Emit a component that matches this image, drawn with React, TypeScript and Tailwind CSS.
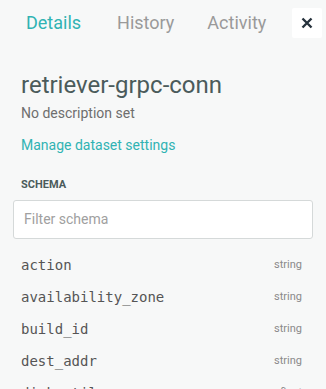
import React from "react";

const rows: [string, string][] = [
  ["action", "string"],
  ["availability_zone", "string"],
  ["build_id", "string"],
  ["dest_addr", "string"],
  ["disk_util", "float"],
];

export default function App() {
  return (
    <div
      className="w-[326px] h-[389px] overflow-hidden bg-[#f7f8f8]"
      style={{ fontFamily: "Roboto, 'Noto Sans', sans-serif" }}
    >
      <div className="flex items-start h-[50px] pt-[8px]">
        <div className="flex flex-1 pl-[26px] pt-[3px] text-[18px] leading-[24px]">
          <span className="text-[#30b3b3]">Details</span>
          <span className="text-[#9a9a9a] ml-[36px]">History</span>
          <span className="text-[#9a9a9a] ml-[33px]">Activity</span>
        </div>
        <div className="w-[30px] h-[30px] mr-[4px] bg-white rounded-[2px] flex items-center justify-center">
          <svg width="12" height="12" viewBox="0 0 12 12">
            <path d="M1.5 1.5 L10.5 10.5 M10.5 1.5 L1.5 10.5" stroke="#26323c" strokeWidth="2.4" strokeLinecap="butt" />
          </svg>
        </div>
      </div>
      <div className="px-[21px]">
        <h1 className="text-[24px] leading-[30px] text-[#4b5b5b] mt-[20px]">retriever-grpc-conn</h1>
        <p className="text-[14px] leading-[20px] text-[#6e6e6e] mt-[3px]">No description set</p>
        <p className="text-[14px] leading-[20px] text-[#30b3b3] mt-[12px]">Manage dataset settings</p>
        <p className="text-[11px] leading-[14px] font-bold text-[#4b5b5b] mt-[23px]">SCHEMA</p>
      </div>
      <div className="px-[13px] mt-[8px]">
        <div className="h-[39px] bg-white border border-[#d5d9d9] rounded-[3px] flex items-center px-[10px] text-[14px] text-[#a0a0a0]">
          Filter schema
        </div>
      </div>
      <div className="pl-[21px] pr-[24px] mt-[10px]">
        {rows.map(([n, t]) => (
          <div key={n} className="flex items-center justify-between h-[32px]">
            <span
              className="text-[14px] text-[#555555]"
              style={{ fontFamily: "'DejaVu Sans Mono', 'Liberation Mono', monospace" }}
            >
              {n}
            </span>
            <span className="text-[11px] text-[#8a8a8a]">{t}</span>
          </div>
        ))}
      </div>
    </div>
  );
}
